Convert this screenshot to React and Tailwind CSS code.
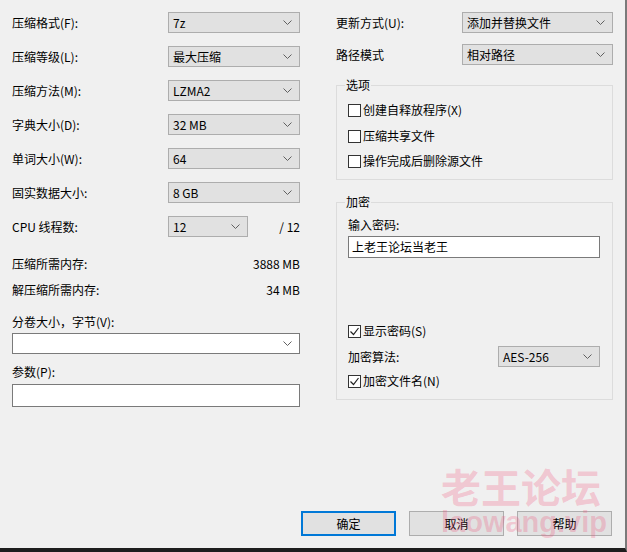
import React from 'react';

const FONT = { fontFamily: '"Noto Sans CJK SC", "Noto Sans", sans-serif' };

const Chevron = () => (
  <svg width="9" height="5" viewBox="0 0 9 5" className="shrink-0">
    <path d="M0.5 0.5 L4.5 4.5 L8.5 0.5" fill="none" stroke="#606060" strokeWidth="1" />
  </svg>
);

const Select = ({ value, className = '', white }) => (
  <div
    className={`flex items-center justify-between border pl-[4px] pr-[7px] ${
      white ? 'bg-white border-[#7a7a7a]' : 'bg-[#e1e1e1] border-[#adadad]'
    } ${className}`}
  >
    <span className="leading-none">{value}</span>
    <Chevron />
  </div>
);

const Row = ({ label, children }) => (
  <div className="flex items-center justify-between h-[21px]">
    <span className="leading-none">{label}</span>
    {children}
  </div>
);

const Check = ({ checked, label }) => (
  <div className="flex items-center h-[16px] gap-[2px]">
    <div className="w-[13px] h-[13px] border border-[#333] bg-white flex items-center justify-center">
      {checked && (
        <svg width="11" height="11" viewBox="0 0 11 11">
          <path d="M1.5 5.5 L4.5 8.5 L9.5 2" fill="none" stroke="#222" strokeWidth="1.2" />
        </svg>
      )}
    </div>
    <span className="leading-none">{label}</span>
  </div>
);

const Group = ({ title, className = '', children }) => (
  <fieldset className={`border border-[#dcdcdc] pl-[11px] pr-[12px] ${className}`}>
    <legend className="ml-[-3px] px-[1px] leading-[16px] h-[16px]">{title}</legend>
    {children}
  </fieldset>
);

const Button = ({ children, primary }) => (
  <div
    className={`w-[95px] h-[25px] bg-[#e1e1e1] flex items-center justify-center ${
      primary ? 'border-2 border-[#0078d7]' : 'border border-[#adadad]'
    }`}
  >
    {children}
  </div>
);

export default function App() {
  return (
    <div
      className="relative w-[627px] h-[552px] bg-[#f0f0f0] text-[12px] text-black flex flex-col border-r-2 border-r-[#7a7a7a] border-b-4 border-b-[#1e1e1e] overflow-hidden"
      style={FONT}
    >
      <div className="flex">
        {/* left column */}
        <div className="ml-[12px] w-[288px] pt-[12px] flex flex-col">
          <div className="flex flex-col gap-[13px]">
            <Row label="压缩格式(F):">
              <Select value="7z" className="w-[132px] h-[21px]" />
            </Row>
            <Row label="压缩等级(L):">
              <Select value="最大压缩" className="w-[132px] h-[21px]" />
            </Row>
            <Row label="压缩方法(M):">
              <Select value="LZMA2" className="w-[132px] h-[21px]" />
            </Row>
            <Row label="字典大小(D):">
              <Select value="32 MB" className="w-[132px] h-[21px]" />
            </Row>
            <Row label="单词大小(W):">
              <Select value="64" className="w-[132px] h-[21px]" />
            </Row>
            <Row label="固实数据大小:">
              <Select value="8 GB" className="w-[132px] h-[21px]" />
            </Row>
            <div className="flex items-center h-[21px]">
              <span className="leading-none w-[156px]">CPU 线程数:</span>
              <Select value="12" className="w-[80px] h-[21px]" />
              <span className="ml-auto leading-none">/ 12</span>
            </div>
          </div>
          <div className="mt-[17px] h-[20px] flex items-center justify-between">
            <span>压缩所需内存:</span>
            <span>3888 MB</span>
          </div>
          <div className="mt-[6px] h-[20px] flex items-center justify-between">
            <span>解压缩所需内存:</span>
            <span>34 MB</span>
          </div>
          <div className="mt-[12px] h-[20px] flex items-center">分卷大小，字节(V):</div>
          <Select value="" white className="mt-[1px] h-[21px]" />
          <div className="mt-[8px] h-[20px] flex items-center">参数(P):</div>
          <div className="mt-[2px] h-[23px] bg-white border border-[#7a7a7a]" />
        </div>

        {/* right column */}
        <div className="ml-[36px] w-[277px] pt-[12px] flex flex-col">
          <Row label="更新方式(U):">
            <Select value="添加并替换文件" className="w-[151px] h-[21px]" />
          </Row>
          <div className="mt-[11px]">
            <Row label="路径模式">
              <Select value="相对路径" className="w-[151px] h-[21px]" />
            </Row>
          </div>

          <Group title="选项" className="mt-[12px] pb-[10px]">
            <div className="mt-[9px]">
              <Check label="创建自释放程序(X)" />
            </div>
            <div className="mt-[10px]">
              <Check label="压缩共享文件" />
            </div>
            <div className="mt-[9px]">
              <Check label="操作完成后删除源文件" />
            </div>
          </Group>

          <Group title="加密" className="mt-[14px] pb-[10px]">
            <div className="mt-[7px] h-[16px] flex items-center">输入密码:</div>
            <div className="mt-[3px] h-[22px] bg-white border border-[#7a7a7a] flex items-center pl-[3px]">
              <span className="leading-none">上老王论坛当老王</span>
            </div>
            <div className="mt-[65px]">
              <Check checked label="显示密码(S)" />
            </div>
            <div className="mt-[7px] flex items-center justify-between h-[21px]">
              <span className="leading-none">加密算法:</span>
              <Select value="AES-256" className="w-[102px] h-[21px]" />
            </div>
            <div className="mt-[6px]">
              <Check checked label="加密文件名(N)" />
            </div>
          </Group>
        </div>
      </div>

      <div className="mt-auto mb-[12px] flex justify-end gap-[13px] pr-[13px]">
        <Button primary>确定</Button>
        <Button>取消</Button>
        <Button>帮助</Button>
      </div>

      {/* watermark overlay */}
      <div className="absolute left-[441px] top-[466px] pointer-events-none flex flex-col text-[rgba(240,80,120,0.27)] font-bold">
        <span className="text-[40px] leading-none">老王论坛</span>
        <span
          className="text-[29px] leading-none mt-[2px]"
          style={{ fontFamily: '"Liberation Sans", Arial, sans-serif' }}
        >
          laowang.vip
        </span>
      </div>
    </div>
  );
}
